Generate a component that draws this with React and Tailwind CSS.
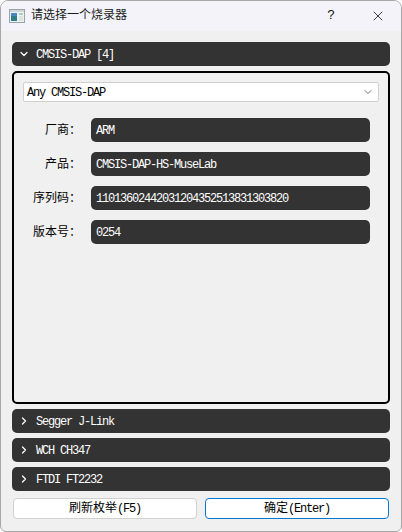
import { ChevronDown, ChevronRight, X } from 'lucide-react'

const font = "font-['Liberation_Mono','Noto_Sans_CJK_SC',monospace]"

const fields = [
  { label: '厂商：', value: 'ARM' },
  { label: '产品：', value: 'CMSIS-DAP-HS-MuseLab' },
  { label: '序列码：', value: '11013602442031204352513831303820' },
  { label: '版本号：', value: '0254' },
]

const SectionHeader = ({ title, open }) => (
  <div className="flex h-6 shrink-0 items-center rounded-[5px] bg-[#333333] pl-[6px] text-[12px] tracking-[-1.2px] text-white">
    {open ? (
      <ChevronDown size={12} strokeWidth={2.5} className="shrink-0" />
    ) : (
      <ChevronRight size={12} strokeWidth={2.5} className="shrink-0" />
    )}
    <span className="ml-[6px] pt-px">{title}</span>
  </div>
)

const Field = ({ label, value }) => (
  <div className="flex h-6 items-center">
    <div className="w-[58px] whitespace-nowrap pt-px text-right text-[12px] text-black">{label}</div>
    <div className="ml-[10px] flex h-6 flex-1 items-center rounded-[5px] bg-[#333333] pl-[5px] pt-px text-[12px] tracking-[-1.2px] text-white">
      {value}
    </div>
  </div>
)

export default function App() {
  return (
    <div className={`${font} h-[532px] w-[402px] bg-white`}>
      <div className="flex h-[532px] w-[402px] flex-col overflow-hidden rounded-t-[8px] rounded-b-[6px] border border-[#a8a8a8] bg-[#f0f0f0]">
        <div className="flex h-[30px] shrink-0 items-center bg-[#f3f3f9] pl-[8px]">
          <svg width="16" height="14" viewBox="0 0 16 14" className="shrink-0">
            <rect x="0.5" y="0.5" width="15" height="13" fill="#eef1f3" stroke="#9aa3a8" />
            <rect x="1" y="1" width="14" height="2" fill="#cfd6da" />
            <rect x="2" y="4" width="6" height="8" fill="#2f7d86" />
            <rect x="2" y="4" width="6" height="3" fill="#4a86c0" />
            <rect x="10" y="4" width="4" height="2" fill="#a9d0b8" />
            <rect x="10" y="7" width="4" height="5" fill="#d8e6dc" />
          </svg>
          <span className="ml-[6px] text-[12px] text-[#1a1a1a]">请选择一个烧录器</span>
          <span className="ml-auto mr-[35px] text-[13px] text-[#111111]">?</span>
          <X size={16} strokeWidth={1.2} className="mr-[15px] text-[#111111]" />
        </div>

        <div className="flex flex-1 flex-col px-[11px] pt-[11px]">
          <SectionHeader title="CMSIS-DAP [4]" open />

          <div className="mt-[5px] flex h-[333px] shrink-0 flex-col rounded-[5px] border-2 border-black px-[9px] pt-[9px]">
            <div className="flex h-[20px] shrink-0 items-center justify-between rounded-[2px] border border-[#d0d0d0] bg-white pl-[3px] pr-[4px] text-[12px] tracking-[-1.2px] text-black">
              <span className="pt-px">Any CMSIS-DAP</span>
              <ChevronDown size={12} strokeWidth={1.5} className="text-[#444444]" />
            </div>
            <div className="mt-[16px] flex flex-col gap-[10px] pr-[9px]">
              {fields.map((f) => (
                <Field key={f.label} label={f.label} value={f.value} />
              ))}
            </div>
          </div>

          <div className="mt-[5px] flex flex-col gap-[5px]">
            <SectionHeader title="Segger J-Link" />
            <SectionHeader title="WCH CH347" />
            <SectionHeader title="FTDI FT2232" />
          </div>

          <div className="mt-[7px] flex gap-[8px] px-[1px]">
            <button className="h-[21px] w-[184px] rounded-[4px] border border-[#d0d0d0] bg-white text-[12px] text-black">
              刷新枚举<span className="tracking-[-1.2px]">(F5)</span>
            </button>
            <button className="h-[21px] w-[184px] rounded-[4px] border border-[#0078d4] bg-white text-[12px] text-black">
              确定<span className="tracking-[-1.2px]">(Enter)</span>
            </button>
          </div>
        </div>
      </div>
    </div>
  )
}
